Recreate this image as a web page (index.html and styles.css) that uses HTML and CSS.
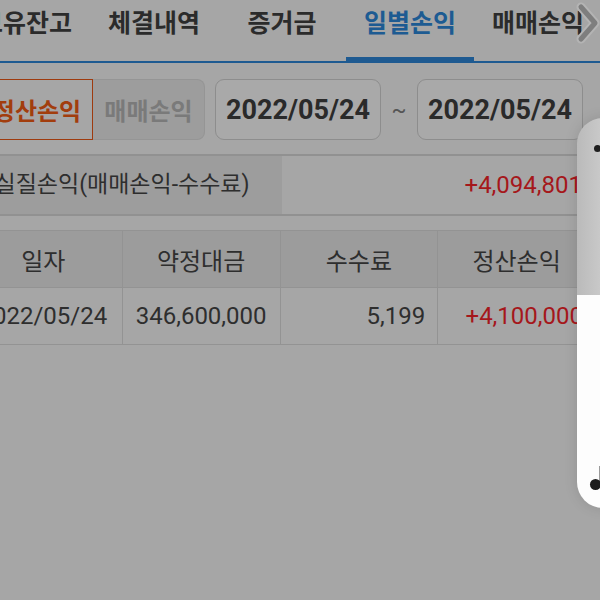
FILE: index.html
```html
<!DOCTYPE html>
<html lang="ko">
<head>
    <meta charset="UTF-8">
    <meta name="viewport" content="width=device-width, initial-scale=1.0">
    <title>일별손익</title>
    <link rel="stylesheet" href="styles.css">
</head>
<body>
    <div class="screen">
        <nav class="tabs">
            <div class="tab">보유잔고</div>
            <div class="tab">체결내역</div>
            <div class="tab">증거금</div>
            <div class="tab active">일별손익</div>
            <div class="tab">매매손익</div>
        </nav>

        <div class="filter">
            <div class="seg">
                <div class="seg-btn on">정산손익</div>
                <div class="seg-btn off">매매손익</div>
            </div>
            <div class="date">2022/05/24</div>
            <div class="tilde">~</div>
            <div class="date">2022/05/24</div>
        </div>

        <div class="summary">
            <div class="summary-label">실질손익(매매손익-수수료)</div>
            <div class="summary-value">+4,094,801</div>
        </div>

        <table class="daily">
            <thead>
                <tr>
                    <th>일자</th>
                    <th>약정대금</th>
                    <th>수수료</th>
                    <th>정산손익</th>
                </tr>
            </thead>
            <tbody>
                <tr>
                    <td class="center">2022/05/24</td>
                    <td class="center">346,600,000</td>
                    <td class="num">5,199</td>
                    <td class="num plus">+4,100,000</td>
                </tr>
            </tbody>
        </table>
    </div>

    <svg class="tabs-more" width="26" height="44" viewBox="0 0 26 44">
        <path d="M6 6 L20 22 L6 38" fill="none" stroke="#b4b4b4" stroke-width="9" stroke-linecap="round" stroke-linejoin="round"/>
        <path d="M6 6 L20 22 L6 38" fill="none" stroke="#7e7e7e" stroke-width="5" stroke-linecap="round" stroke-linejoin="round"/>
    </svg>

    <aside class="edge-panel">
        <div class="edge-top"></div>
        <div class="edge-bottom"></div>
        <span class="edge-dot small"></span>
        <span class="edge-line"></span>
        <span class="edge-dot big"></span>
    </aside>
</body>
</html>
```

FILE: styles.css
```css
body {
    margin: 0;
    height: 600px;
    overflow: hidden;
    background: #a6a6a6;
    font-family: Roboto, "Noto Sans CJK KR", sans-serif;
    color: #2b2b2b;
}
.screen {
    margin-left: -38px;
    width: 640px;
}
.tabs {
    display: flex;
    height: 61px;
    border-bottom: 2px solid #1e5a91;
}
.tab {
    position: relative;
    flex: none;
    width: 128px;
    text-align: center;
    font-size: 25px;
    font-weight: 700;
    line-height: 47px;
}
.tab.active {
    color: #1d5b92;
}
.tab.active::after {
    content: "";
    position: absolute;
    left: 0;
    right: 0;
    bottom: -2px;
    height: 6px;
    background: #1e5a91;
}
.tabs-more {
    position: absolute;
    left: 575px;
    top: 1px;
}
.filter {
    display: flex;
    align-items: center;
    height: 61px;
    margin-top: 16px;
    padding-left: 19px;
}
.seg {
    display: flex;
    height: 61px;
}
.seg-btn {
    display: flex;
    align-items: center;
    justify-content: center;
    width: 112px;
    box-sizing: border-box;
    font-size: 24px;
    font-weight: 700;
}
.seg-btn.on {
    border: 1px solid #9e3b0f;
    color: #a23d0d;
}
.seg-btn.off {
    background: #9d9d9d;
    border: 1px solid #959595;
    border-left: none;
    border-radius: 0 8px 8px 0;
    color: #7a7a7a;
}
.date {
    display: flex;
    align-items: center;
    justify-content: center;
    width: 166px;
    height: 61px;
    margin-left: 10px;
    box-sizing: border-box;
    border: 1px solid #8d8d8d;
    border-radius: 9px;
    background: #a9a9a9;
    font-size: 27px;
    font-weight: 700;
    color: #2a2a2a;
}
.tilde {
    width: 36px;
    margin-right: -10px;
    text-align: center;
    font-size: 22px;
    color: #555;
}
.summary {
    display: flex;
    height: 58px;
    margin-top: 14px;
    border-top: 2px solid #919191;
    border-bottom: 2px solid #919191;
    line-height: 58px;
}
.summary-label {
    width: 320px;
    background: #9d9d9d;
    text-align: center;
    font-size: 23px;
    color: #2e2e2e;
}
.summary-value {
    flex: 1;
    padding-right: 20px;
    text-align: right;
    font-size: 24px;
    color: #a5171b;
}
.daily {
    width: 632px;
    margin-top: 14px;
    margin-left: 2px;
    border-collapse: collapse;
    table-layout: fixed;
}
.daily th,
.daily td {
    height: 56px;
    padding: 0 12px;
    border: 1px solid #939393;
}
.daily th {
    background: #9c9c9c;
    font-size: 24px;
    font-weight: 400;
    color: #2e2e2e;
}
.daily td {
    font-size: 24px;
    color: #2e2e2e;
}
.daily .center {
    text-align: center;
}
.daily .num {
    text-align: right;
}
.daily .plus {
    color: #a5171b;
}
.edge-panel {
    position: absolute;
    left: 577px;
    top: 118px;
    width: 60px;
    height: 390px;
    display: flex;
    flex-direction: column;
    border-radius: 26px;
    overflow: hidden;
    box-shadow: 0 0 14px rgba(0, 0, 0, 0.12);
}
.edge-top {
    height: 177px;
    background: linear-gradient(90deg, #bababa, #c9c9c9 40%, #cbcbcb);
}
.edge-bottom {
    flex: 1;
    background: #fdfdfd;
}
.edge-dot {
    position: absolute;
    border-radius: 50%;
    background: #1e1e1e;
}
.edge-dot.small {
    left: 17px;
    top: 27px;
    width: 7px;
    height: 7px;
}
.edge-dot.big {
    left: 13px;
    top: 361px;
    width: 11px;
    height: 11px;
}
.edge-line {
    position: absolute;
    left: 22px;
    top: 348px;
    width: 1px;
    height: 16px;
    background: #9a9a9a;
}
```
